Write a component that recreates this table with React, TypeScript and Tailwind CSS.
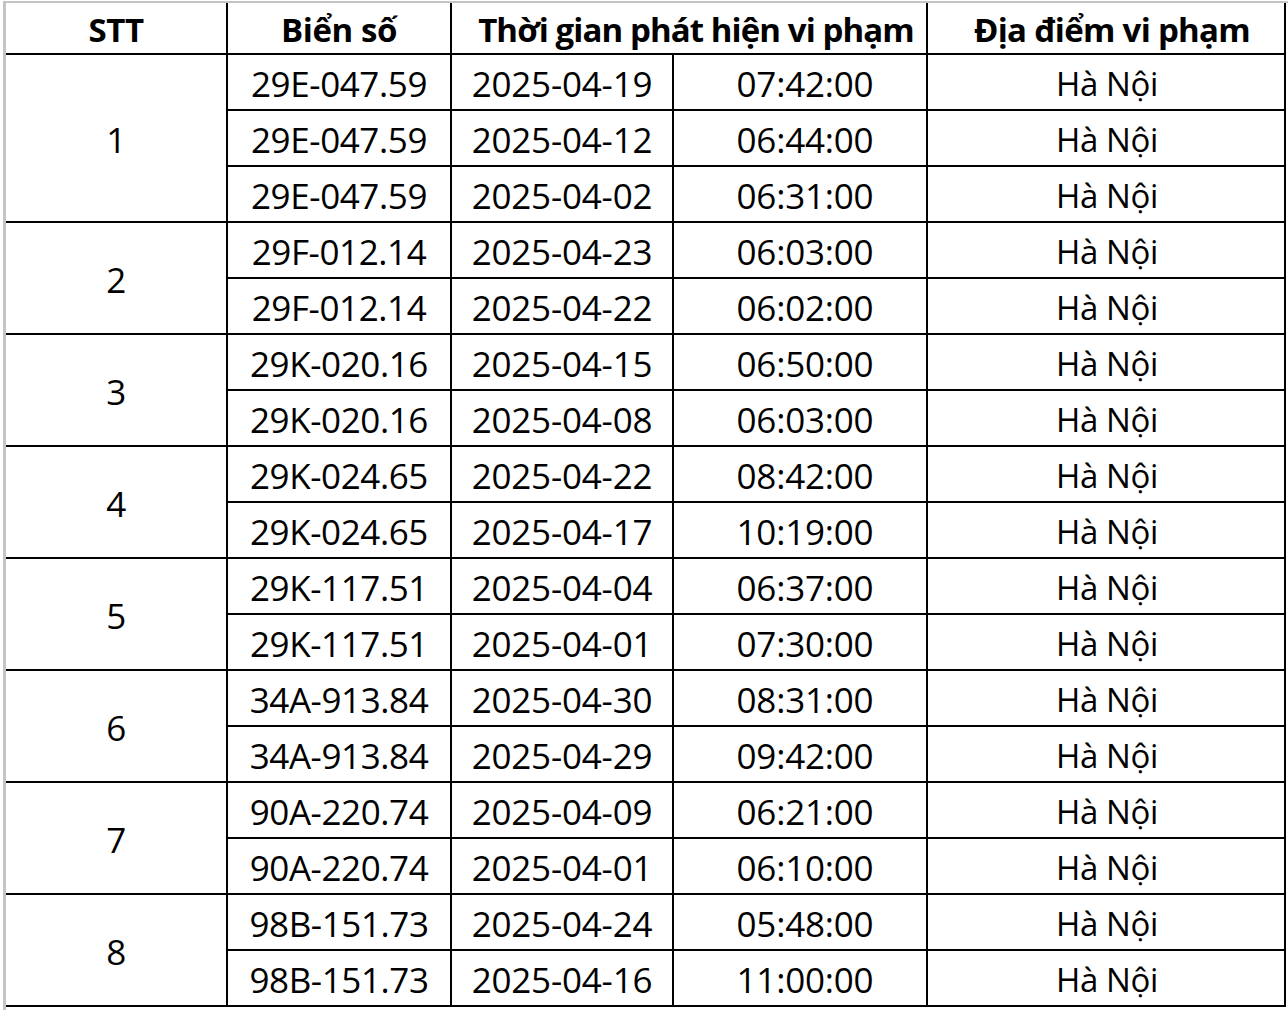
import React from 'react';

type Row = { plate: string; date: string; time: string };

const groups: Row[][] = [
  [
    { plate: '29E-047.59', date: '2025-04-19', time: '07:42:00' },
    { plate: '29E-047.59', date: '2025-04-12', time: '06:44:00' },
    { plate: '29E-047.59', date: '2025-04-02', time: '06:31:00' },
  ],
  [
    { plate: '29F-012.14', date: '2025-04-23', time: '06:03:00' },
    { plate: '29F-012.14', date: '2025-04-22', time: '06:02:00' },
  ],
  [
    { plate: '29K-020.16', date: '2025-04-15', time: '06:50:00' },
    { plate: '29K-020.16', date: '2025-04-08', time: '06:03:00' },
  ],
  [
    { plate: '29K-024.65', date: '2025-04-22', time: '08:42:00' },
    { plate: '29K-024.65', date: '2025-04-17', time: '10:19:00' },
  ],
  [
    { plate: '29K-117.51', date: '2025-04-04', time: '06:37:00' },
    { plate: '29K-117.51', date: '2025-04-01', time: '07:30:00' },
  ],
  [
    { plate: '34A-913.84', date: '2025-04-30', time: '08:31:00' },
    { plate: '34A-913.84', date: '2025-04-29', time: '09:42:00' },
  ],
  [
    { plate: '90A-220.74', date: '2025-04-09', time: '06:21:00' },
    { plate: '90A-220.74', date: '2025-04-01', time: '06:10:00' },
  ],
  [
    { plate: '98B-151.73', date: '2025-04-24', time: '05:48:00' },
    { plate: '98B-151.73', date: '2025-04-16', time: '11:00:00' },
  ],
];

const cell = 'flex items-center justify-center border-r-2 border-b-2 border-black pt-[3px]';
const head = `${cell} text-[33px] font-bold`;

export default function App() {
  return (
    <div className="min-h-[1010px] w-[1288px] bg-white text-black" style={{ fontFamily: '"Open Sans", "Noto Sans", sans-serif' }}>
      <div className="ml-[3px] mt-[1px] border-l-[3px] border-t-2 border-[#c4c4c4] pb-[4px]">
        <div className="grid grid-cols-[222px_224px_222px_254px_358px] grid-rows-[52px_repeat(17,56px)] text-[35px] leading-none tracking-[-0.4px]">
          <div className={head}>STT</div>
          <div className={head}>Biển số</div>
          <div className={`${head} col-span-2 pl-[14px] tracking-[-0.9px]`}>Thời gian phát hiện vi phạm</div>
          <div className={`${head} pl-[12px] tracking-[-0.7px]`}>Địa điểm vi phạm</div>
          {groups.map((g, gi) => (
            <React.Fragment key={gi}>
              <div className={`${cell} ${g.length === 3 ? 'row-span-3' : 'row-span-2'}`}>{gi + 1}</div>
              {g.map((r, ri) => (
                <React.Fragment key={ri}>
                  <div className={`${cell} col-start-2`}>{r.plate}</div>
                  <div className={`${cell} tracking-[-0.2px]`}>{r.date}</div>
                  <div className={`${cell} pl-[10px] tracking-[-0.2px]`}>{r.time}</div>
                  <div className={`${cell} pl-[2px] text-[33px]`}>Hà Nội</div>
                </React.Fragment>
              ))}
            </React.Fragment>
          ))}
        </div>
      </div>
    </div>
  );
}
